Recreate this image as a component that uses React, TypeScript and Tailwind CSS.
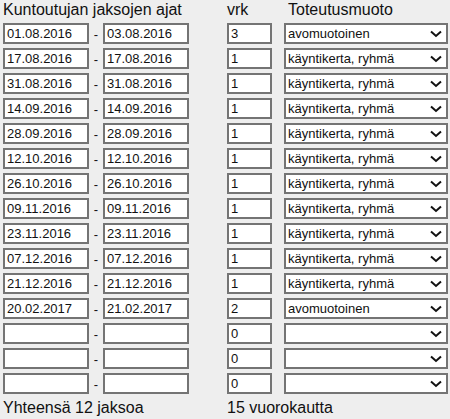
import React from 'react';

type Row = { from: string; to: string; days: string; mode: string };

const rows: Row[] = [
  { from: '01.08.2016', to: '03.08.2016', days: '3', mode: 'avomuotoinen' },
  { from: '17.08.2016', to: '17.08.2016', days: '1', mode: 'käyntikerta, ryhmä' },
  { from: '31.08.2016', to: '31.08.2016', days: '1', mode: 'käyntikerta, ryhmä' },
  { from: '14.09.2016', to: '14.09.2016', days: '1', mode: 'käyntikerta, ryhmä' },
  { from: '28.09.2016', to: '28.09.2016', days: '1', mode: 'käyntikerta, ryhmä' },
  { from: '12.10.2016', to: '12.10.2016', days: '1', mode: 'käyntikerta, ryhmä' },
  { from: '26.10.2016', to: '26.10.2016', days: '1', mode: 'käyntikerta, ryhmä' },
  { from: '09.11.2016', to: '09.11.2016', days: '1', mode: 'käyntikerta, ryhmä' },
  { from: '23.11.2016', to: '23.11.2016', days: '1', mode: 'käyntikerta, ryhmä' },
  { from: '07.12.2016', to: '07.12.2016', days: '1', mode: 'käyntikerta, ryhmä' },
  { from: '21.12.2016', to: '21.12.2016', days: '1', mode: 'käyntikerta, ryhmä' },
  { from: '20.02.2017', to: '21.02.2017', days: '2', mode: 'avomuotoinen' },
  { from: '', to: '', days: '0', mode: '' },
  { from: '', to: '', days: '0', mode: '' },
  { from: '', to: '', days: '0', mode: '' },
];

function Box({ value, className }: { value: string; className: string }) {
  return (
    <div className={`h-[21px] border-2 border-[#747474] bg-white pl-[2px] text-[13px] leading-[17px] text-[#111] whitespace-nowrap overflow-hidden ${className}`}>
      {value}
    </div>
  );
}

function Chevron() {
  return (
    <svg width="12" height="8" viewBox="0 0 12 8" className="shrink-0">
      <polyline points="1,1.5 6,6 11,1.5" fill="none" stroke="#111" strokeWidth="2" />
    </svg>
  );
}

export default function App() {
  return (
    <div
      className="w-[450px] h-[419px] bg-[#eeeeee] text-[#111] pl-[3px] overflow-hidden"
      style={{ fontFamily: '"Liberation Sans", Arial, sans-serif' }}
    >
      <div className="flex h-[23px] text-[16px] leading-[18px] pt-[1px]">
        <div className="w-[224px]">Kuntoutujan jaksojen ajat</div>
        <div className="w-[60px]">vrk</div>
        <div className="pl-[1px]">Toteutusmuoto</div>
      </div>

      <div className="flex flex-col gap-[4px]">
        {rows.map((r, i) => (
          <div key={i} className="flex items-center">
            <Box value={r.from} className="w-[86px]" />
            <div className="w-[14px] text-center text-[13px] leading-[17px] pt-[2px]">-</div>
            <Box value={r.to} className="w-[86px]" />
            <Box value={r.days} className="w-[45px] ml-[38px]" />
            <div className="ml-[12px] w-[164px] h-[21px] border-2 border-[#747474] bg-white pl-[2px] pr-[4px] flex items-center justify-between text-[13px] text-[#111]">
              <span className="whitespace-nowrap">{r.mode}</span>
              <Chevron />
            </div>
          </div>
        ))}
      </div>

      <div className="flex mt-[5px] text-[16px] leading-[18px]">
        <div className="w-[224px]">Yhteensä 12 jaksoa</div>
        <div>15 vuorokautta</div>
      </div>
    </div>
  );
}
